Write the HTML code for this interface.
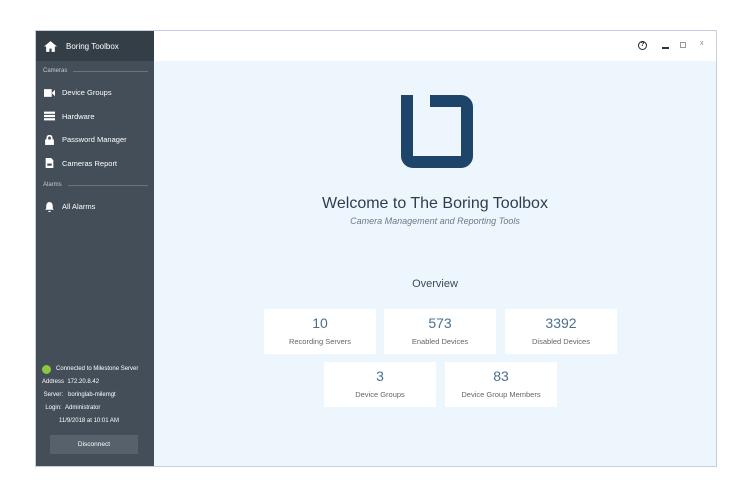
<!DOCTYPE html>
<html><head><style>
*{margin:0;padding:0;box-sizing:border-box}
body{width:750px;height:501px;background:#fff;font-family:"Liberation Sans",sans-serif;position:relative;overflow:hidden}
.win{position:absolute;left:35px;top:30px;width:682px;height:437px;border:1px solid #c9cde0;background:#eef6fd}
.side{position:absolute;left:0;top:0;width:118px;height:435px;background:#434e58;color:#fff}
.sh{height:30px;background:#343e47;font-size:8px;display:flex;align-items:center;padding-left:8px}
.sec{font-size:6px;color:#c5cbd1;padding-left:7px;display:flex;align-items:center;height:20px}
.sec span{flex:1;height:1px;background:#6a747d;margin:0 6px}
.it{font-size:7.5px;height:23.5px;display:flex;align-items:center;padding-left:8px}
.ic{width:11px;height:10px;margin-right:7px;display:inline-block}
.top{position:absolute;left:118px;top:0;right:0;height:30px;background:#fff}
.card{position:absolute;width:112px;height:45px;background:#fff;text-align:center}
.card b{display:block;font-weight:normal;font-size:14px;color:#4d6f8f;margin-top:6px}
.card i{display:block;font-style:normal;font-size:7.5px;color:#666;margin-top:6px}
</style></head><body>
<div class="win">
<div class="side">
<div class="sh"><svg width="13" height="11" viewBox="0 0 12 10" style="margin-right:9px"><path d="M0 5L6 0L12 5H10V10H7V7H5V10H2V5Z" fill="#fff"/></svg>Boring Toolbox</div>
<div class="sec">Cameras<span></span></div>
<div class="it"><svg class="ic" viewBox="0 0 10 8"><rect x="0" y="0.5" width="7" height="7" fill="#fff"/><path d="M7 4L10 1V7Z" fill="#fff"/></svg>Device Groups</div>
<div class="it"><svg class="ic" viewBox="0 0 10 8"><rect y="0" width="10" height="2" fill="#fff"/><rect y="3" width="10" height="2" fill="#fff"/><rect y="6" width="10" height="2" fill="#fff"/></svg>Hardware</div>
<div class="it"><svg class="ic" viewBox="0 0 10 9"><rect x="1" y="4" width="8" height="5" fill="#fff"/><path d="M3 4V2.5A2 2 0 0 1 7 2.5V4" stroke="#fff" stroke-width="1.6" fill="none"/></svg>Password Manager</div>
<div class="it"><svg class="ic" viewBox="0 0 10 9"><path d="M1.5 0H6.5L8.5 2V9H1.5Z" fill="#fff"/><rect x="3" y="5" width="4" height="2" fill="#434e58"/></svg>Cameras Report</div>
<div class="sec">Alarms<span></span></div>
<div class="it"><svg class="ic" viewBox="0 0 10 9"><path d="M5 0C3 0 2 2 2 4V6L1 7H9L8 6V4C8 2 7 0 5 0ZM4 8H6V9H4Z" fill="#fff"/></svg>All Alarms</div>
<div style="position:absolute;top:332px;left:6px;font-size:6px;line-height:13px;color:#fff">
<div style="display:flex;align-items:center"><span style="width:9px;height:9px;border-radius:50%;background:#8dc63f;margin-right:5px"></span>Connected to Milestone Server</div>
<div>Address&nbsp;&nbsp;172.20.8.42</div>
<div>&nbsp;Server:&nbsp;&nbsp;&nbsp;boringlab-milemgt</div>
<div>&nbsp;&nbsp;Login:&nbsp;&nbsp;Administrator</div>
<div style="padding-left:17px">11/9/2018 at 10:01 AM</div>
</div>
<div style="position:absolute;left:14px;top:404px;width:88px;height:19px;background:#56616b;font-size:6.5px;display:flex;align-items:center;justify-content:center">Disconnect</div>
</div>
<div class="top">
<div style="position:absolute;left:484px;top:10px;width:9px;height:9px;border:1.4px solid #222;border-radius:50%;font-size:6px;line-height:6.5px;text-align:center;font-weight:bold">?</div>
<div style="position:absolute;left:508px;top:16px;width:7px;height:1.5px;background:#333"></div>
<div style="position:absolute;left:526px;top:11px;width:6px;height:6px;border:1px solid #999"></div>
<div style="position:absolute;left:546px;top:9px;font-size:7px;color:#888">x</div>
</div>
</div>
<svg style="position:absolute;left:401px;top:95px" width="72" height="73" viewBox="0 0 72 73"><path d="M6 0V61a6 6 0 0 0 6 6H60a6 6 0 0 0 6-6V12a6 6 0 0 0-6-6H29" stroke="#1e4569" stroke-width="12" fill="none"/></svg>
<div style="position:absolute;left:153px;width:564px;top:195px;text-align:center;font-size:16px;color:#2c3e50">Welcome to The Boring Toolbox</div>
<div style="position:absolute;left:153px;width:564px;top:216px;text-align:center;font-size:9px;font-style:italic;color:#6b7a88">Camera Management and Reporting Tools</div>
<div style="position:absolute;left:153px;width:564px;top:278px;text-align:center;font-size:11px;color:#3a4a5a">Overview</div>
<div class="card" style="left:264px;top:309px"><b>10</b><i>Recording Servers</i></div>
<div class="card" style="left:384px;top:309px"><b>573</b><i>Enabled Devices</i></div>
<div class="card" style="left:505px;top:309px"><b>3392</b><i>Disabled Devices</i></div>
<div class="card" style="left:324px;top:362px"><b>3</b><i>Device Groups</i></div>
<div class="card" style="left:445px;top:362px"><b>83</b><i>Device Group Members</i></div>
</body></html>
